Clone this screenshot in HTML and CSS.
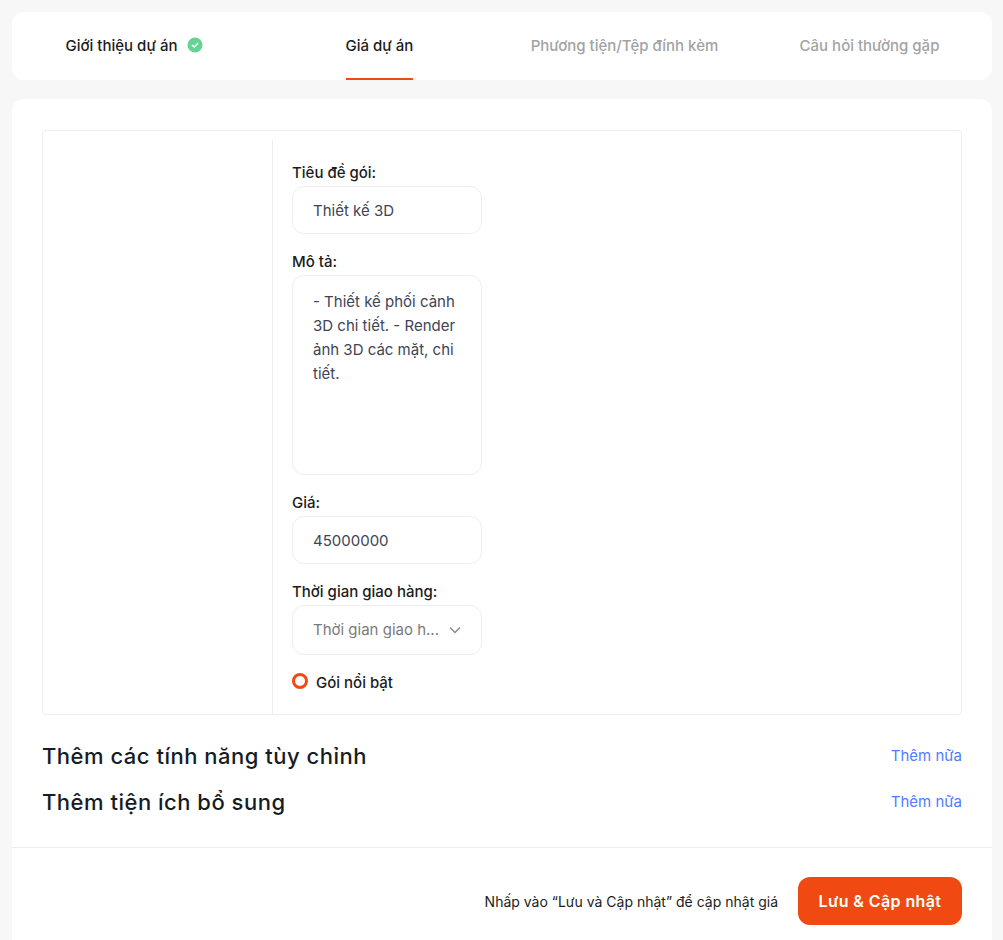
FILE: index.html
```html
<!DOCTYPE html>
<html lang="en">
<head>
  <meta charset="UTF-8">
  <title>Giá dự án</title>
  <link rel="stylesheet" href="styles.css">
</head>
<body>
  <!-- Step tabs -->
  <nav class="tabs">
    <a class="tab tab-done">
      <span class="tab-label">Giới thiệu dự án</span>
      <svg class="tab-check" width="16" height="16" viewBox="0 0 16 16">
        <circle cx="8" cy="8" r="7.5" fill="#62d493"/>
        <path d="M5.3 8.2l1.9 1.8 3.5-3.6" fill="none" stroke="#fff" stroke-width="1.5" stroke-linecap="round" stroke-linejoin="round"/>
      </svg>
    </a>
    <a class="tab tab-active"><span class="tab-label">Giá dự án</span></a>
    <a class="tab"><span class="tab-label">Phương tiện/Tệp đính kèm</span></a>
    <a class="tab"><span class="tab-label">Câu hỏi thường gặp</span></a>
  </nav>

  <main class="card">
    <div class="card-body">
      <!-- Package table -->
      <div class="package">
        <div class="package-side"></div>
        <div class="package-col">
          <div class="field">
            <div class="field-label">Tiêu đề gói:</div>
            <div class="input">Thiết kế 3D</div>
          </div>
          <div class="field">
            <div class="field-label">Mô tả:</div>
            <div class="input textarea">- Thiết kế phối cảnh 3D chi tiết. - Render ảnh 3D các mặt, chi tiết.</div>
          </div>
          <div class="field">
            <div class="field-label">Giá:</div>
            <div class="input">45000000</div>
          </div>
          <div class="field">
            <div class="field-label">Thời gian giao hàng:</div>
            <div class="input select">
              <span class="select-text">Thời gian giao h...</span>
              <svg width="12" height="8" viewBox="0 0 12 8"><path d="M1 1.5l5 5 5-5" fill="none" stroke="#8a8a8a" stroke-width="1.5"/></svg>
            </div>
          </div>
          <div class="radio-row">
            <span class="radio"></span>
            <span class="radio-label">Gói nổi bật</span>
          </div>
        </div>
      </div>

      <div class="extra-row">
        <h2 class="extra-title">Thêm các tính năng tùy chỉnh</h2>
        <a class="extra-link">Thêm nữa</a>
      </div>
      <div class="extra-row">
        <h2 class="extra-title">Thêm tiện ích bổ sung</h2>
        <a class="extra-link">Thêm nữa</a>
      </div>
    </div>

    <div class="card-footer">
      <span class="footer-note">Nhấp vào “Lưu và Cập nhật” để cập nhật giá</span>
      <button class="save-btn">Lưu &amp; Cập nhật</button>
    </div>
  </main>
</body>
</html>
```

FILE: styles.css
```css
/* Page */
body {
  margin: 0;
  padding: 12px 11px 0 12px;
  background: #f7f7f7;
  font-family: Inter, "Noto Sans", sans-serif;
  color: #161c24;
  height: 940px;
  box-sizing: border-box;
  overflow: hidden;
}

/* Tabs */
.tabs {
  display: grid;
  grid-template-columns: repeat(4, 1fr);
  height: 68px;
  background: #fff;
  border-radius: 12px;
}
.tab {
  display: flex;
  justify-content: center;
  align-items: flex-start;
  gap: 10px;
  font-size: 15px;
  font-weight: 500;
  line-height: 20px;
  color: #a3a3a3;
}
.tab-label {
  display: block;
  height: 68px;
  padding-top: 24px;
  box-sizing: border-box;
}
.tab-check {
  margin-top: 25px;
}
.tab-done,
.tab-active {
  color: #1c1c1c;
}
.tab-active .tab-label {
  border-bottom: 2px solid #f04a12;
}

/* Main card */
.card {
  margin-top: 19px;
  background: #fff;
  border-radius: 12px 12px 0 0;
  height: 841px;
}
.card-body {
  padding: 31px 30px 0;
}
.package {
  display: flex;
  height: 585px;
  box-sizing: border-box;
  border: 1px solid #eeeeee;
  border-radius: 4px;
  padding-top: 9px;
}
.package-side {
  width: 229px;
  flex-shrink: 0;
}
.package-col {
  border-left: 1px solid #eeeeee;
  padding: 22px 19px 0;
  width: 190px;
}

/* Form fields */
.field {
  margin-bottom: 17px;
}
.field-label {
  font-size: 15px;
  font-weight: 500;
  line-height: 22px;
  color: #1c1c1c;
  margin-bottom: 2px;
}
.input {
  height: 48px;
  box-sizing: border-box;
  border: 1px solid #eeeeee;
  border-radius: 12px;
  padding: 0 20px;
  font-size: 15px;
  line-height: 48px;
  color: #404456;
}
.textarea {
  height: 200px;
  padding: 14px 20px;
  line-height: 24px;
}
.select {
  display: flex;
  align-items: center;
  justify-content: space-between;
  height: 50px;
  padding-right: 20px;
  color: #7a7a7a;
  white-space: nowrap;
}
.radio-row {
  display: flex;
  align-items: flex-start;
  gap: 8px;
}
.radio {
  width: 16px;
  height: 16px;
  margin-top: 1px;
  box-sizing: border-box;
  border: 3px solid #f04a12;
  border-radius: 50%;
}
.radio-label {
  font-size: 15px;
  font-weight: 500;
  line-height: 22px;
  color: #1c1c1c;
}

/* Extras */
.extra-row {
  display: flex;
  justify-content: space-between;
  align-items: center;
  height: 30px;
  margin-bottom: 16px;
}
.package + .extra-row {
  margin-top: 26px;
}
.extra-title {
  margin: 0;
  font-size: 22px;
  font-weight: 500;
  letter-spacing: 0.5px;
  color: #161c24;
}
.extra-link {
  font-size: 15px;
  line-height: 28px;
  color: #4f7cff;
}

/* Footer */
.card-footer {
  display: flex;
  justify-content: flex-end;
  align-items: center;
  gap: 20px;
  margin-top: 30px;
  padding: 29px 30px 15px;
  border-top: 1px solid #eeeeee;
}
.footer-note {
  font-size: 14px;
  color: #1c1c1c;
}
.save-btn {
  width: 164px;
  height: 48px;
  border: 0;
  border-radius: 12px;
  background: #f04a12;
  color: #fff;
  font-family: inherit;
  font-size: 16px;
  font-weight: 600;
  letter-spacing: 0.4px;
}
```
